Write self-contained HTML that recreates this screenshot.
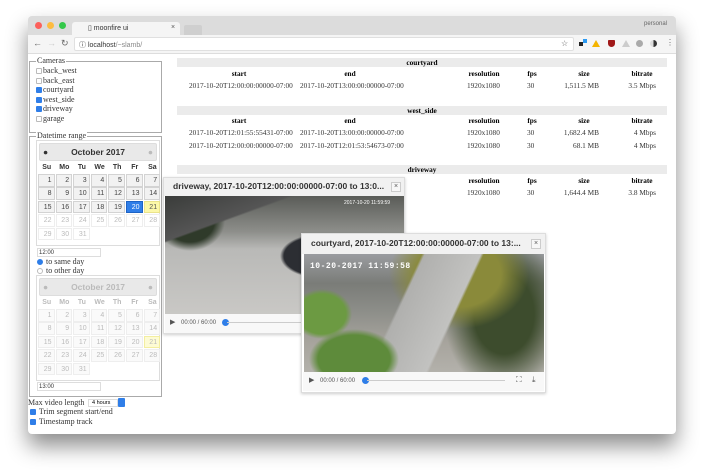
<!DOCTYPE html>
<html><head><style>
*{box-sizing:border-box;margin:0;padding:0}
body{width:704px;height:474px;background:#fff;position:relative;overflow:hidden;font-family:"Liberation Serif",serif;font-size:8px;color:#000}
.a{position:absolute}
.win{left:28px;top:16px;width:648px;height:418px;background:#fff;border-radius:4px;box-shadow:0 12px 22px rgba(0,0,0,.45);overflow:hidden}
.s{font-family:"Liberation Sans",sans-serif}
.cb{display:inline-block;width:6px;height:6px;border:1px solid #bbb;border-radius:1px;vertical-align:-1px;margin-right:1px;background:#fff}
.cb.on{background:#2f7ee8;border-color:#2f7ee8}
fieldset{position:absolute;border:1px solid #aaa}
.lg{position:absolute;background:#fff;padding:0 1px;color:#333}
.cal{position:absolute;border:1px solid #ddd;background:#fff}
.ch{position:absolute;left:2px;right:2px;top:2px;height:18px;background:#e9e9e9;border:1px solid #ddd;border-radius:2px;font:bold 8.5px "Liberation Sans",sans-serif;text-align:center;line-height:17px;color:#333}
.dn{position:absolute;font:bold 7px "Liberation Sans",sans-serif;color:#333;width:17.5px;text-align:center}
.c{position:absolute;width:16.5px;height:12.5px;border:1px solid #d3d3d3;background:#f2f2f2;font:7px "Liberation Sans",sans-serif;color:#444;text-align:right;padding-right:2px;line-height:11px}
.c.x{background:#fff;border-color:#eee;color:#bbb}
.dis .ch,.dis .dn{color:#bbb}
.inp{position:absolute;height:9px;border:1px solid #ddd;font:6px "Liberation Sans",sans-serif;line-height:8px;padding-left:1px;color:#333}
.th{position:absolute;font-weight:bold;font-size:7.3px;text-align:center}
.td{position:absolute;font-size:7.3px;color:#333}
.bar{position:absolute;left:149px;width:490px;height:9px;background:#ebebeb;text-align:center;font-weight:bold;font-size:7.3px;line-height:9px}
.dlg{position:absolute;background:#fff;border:1px solid #ddd;box-shadow:0 1px 3px rgba(0,0,0,.2)}
.dt{position:absolute;left:0;right:0;top:0;background:#f1f1f1;font:bold 8.5px "Liberation Sans",sans-serif;color:#333;padding-left:9px}
.xb{position:absolute;width:10px;height:10px;border:1px solid #ccc;background:#f7f7f7;font:7px "Liberation Sans",sans-serif;text-align:center;line-height:8px;color:#555}
.ctl{position:absolute;left:1px;right:1px;height:19px;background:#f8f8f8;font:6px "Liberation Sans",sans-serif;color:#555}
</style></head><body>
<div class="a win">
 <div class="a" style="left:0;top:0;width:648px;height:19px;background:#dcdcdc"></div>
 <div class="a" style="left:7px;top:6px;width:7px;height:7px;border-radius:50%;background:#fc605b"></div>
 <div class="a" style="left:19px;top:6px;width:7px;height:7px;border-radius:50%;background:#fdbc40"></div>
 <div class="a" style="left:31px;top:6px;width:7px;height:7px;border-radius:50%;background:#34c84a"></div>
 <div class="a" style="left:44px;top:6px;width:108px;height:14px;background:#f5f5f5;border-radius:3px 3px 0 0"></div>
 <div class="a s" style="left:60px;top:8px;font-size:7px;color:#333">▯ moonfire ui</div>
 <div class="a s" style="left:143px;top:8px;font-size:7px;color:#555">×</div>
 <div class="a" style="left:156px;top:9px;width:18px;height:10px;background:#cfcfcf;border-radius:2px 2px 0 0"></div>
 <div class="a s" style="left:616px;top:5px;font-size:6px;color:#666">personal</div>
 <div class="a" style="left:0;top:19px;width:648px;height:19px;background:#f5f5f5;border-bottom:1px solid #ddd"></div>
 <div class="a s" style="left:5px;top:22px;font-size:9px;color:#666">←&nbsp; <span style="color:#ccc">→</span>&nbsp; ↻</div>
 <div class="a" style="left:46px;top:21px;width:500px;height:14px;background:#fff;border:1px solid #e0e0e0;border-radius:2px"></div>
 <div class="a s" style="left:51px;top:24px;font-size:7px;color:#333">ⓘ localhost<span style="color:#888">/~slamb/</span></div>
 <div class="a s" style="left:533px;top:23px;font-size:8px;color:#555">☆</div>
 <div class="a" style="left:551px;top:26px;width:4px;height:4px;background:#222"></div><div class="a" style="left:555px;top:23px;width:4px;height:4px;background:#2b9af3"></div>
 <div class="a" style="left:564px;top:24px;width:0;height:0;border-left:4px solid transparent;border-right:4px solid transparent;border-bottom:7px solid #f4b400"></div>
 <div class="a" style="left:580px;top:24px;width:7px;height:7px;background:#a01818;border-radius:1px 1px 4px 4px"></div>
 <div class="a" style="left:594px;top:24px;width:0;height:0;border-left:4px solid transparent;border-right:4px solid transparent;border-bottom:7px solid #ccc"></div>
 <div class="a" style="left:608px;top:24px;width:7px;height:7px;border-radius:50%;background:#aaa"></div>
 <div class="a" style="left:622px;top:24px;width:7px;height:7px;border-radius:50%;background:linear-gradient(90deg,#ddd 50%,#333 50%)"></div>
 <div class="a s" style="left:638px;top:22px;font-size:8px;color:#666">⋮</div>

 <fieldset style="left:1px;top:45px;width:133px;height:72px"></fieldset>
 <div class="lg" style="left:8px;top:40px">Cameras</div>
 <div class="a" style="left:8px;top:50px;line-height:9.6px;color:#333">
  <div><span class="cb"></span>back_west</div>
  <div><span class="cb"></span>back_east</div>
  <div><span class="cb on"></span>courtyard</div>
  <div><span class="cb on"></span>west_side</div>
  <div><span class="cb on"></span>driveway</div>
  <div><span class="cb"></span>garage</div>
 </div>

 <fieldset style="left:1px;top:120px;width:133px;height:261px"></fieldset>
 <div class="lg" style="left:8px;top:115px">Datetime range</div>

 <div class="cal" style="left:8px;top:124px;width:124px;height:106px">
  <div class="ch">October 2017<span class="a" style="left:3px;top:0;color:#333">●</span><span class="a" style="right:3px;top:0;color:#bbb">●</span></div>
 </div>
 <div class="cal dis" style="left:8px;top:259px;width:124px;height:106px">
  <div class="ch">October 2017<span class="a" style="left:3px;top:0">●</span><span class="a" style="right:3px;top:0">●</span></div>
 </div>
 <div id="cals"></div>

 <div class="inp" style="left:9px;top:232px;width:64px">12:00</div>
 <div class="a" style="left:9px;top:241px;color:#333"><span class="cb" style="border-radius:50%;background:#2f7ee8;border-color:#2f7ee8"></span> to same day</div>
 <div class="a" style="left:9px;top:250px;color:#333"><span class="cb" style="border-radius:50%"></span> to other day</div>
 <div class="inp" style="left:9px;top:366px;width:64px">13:00</div>

 <div class="a" style="left:0;top:382px;color:#333;white-space:nowrap">Max video length</div>
 <div class="a s" style="left:60px;top:383px;width:30px;height:8px;border:1px solid #ddd;font-size:5.5px;line-height:7px;padding-left:3px">4 hours</div>
 <div class="a" style="left:90px;top:382px;width:7px;height:9px;background:#2f7ee8;border-radius:1px"></div>
 <div class="a" style="left:2px;top:391px;color:#333"><span class="cb on"></span> Trim segment start/end</div>
 <div class="a" style="left:2px;top:401px;color:#333"><span class="cb on"></span> Timestamp track</div>

 <div class="bar" style="top:42px">courtyard</div>
 <div class="bar" style="top:90px">west_side</div>
 <div class="bar" style="top:149px">driveway</div>
 <div id="tbl"></div>

 <div class="dlg" style="left:135px;top:161px;width:242px;height:157px">
  <div class="dt" style="height:18px;line-height:17px">driveway, 2017-10-20T12:00:00:00000-07:00 to 13:0...</div>
  <div class="xb" style="right:3px;top:4px">×</div>
  <div class="a" style="left:1px;top:18px;width:239px;height:118px;background:
   linear-gradient(160deg,#3a3c3a 0%,#555 22%,transparent 23%),
   radial-gradient(ellipse 40px 22px at 155px 60px,#2c2e33 90%,transparent 100%),
   radial-gradient(ellipse 35px 30px at 25px 25px,#2f3a2a 70%,transparent 100%),
   linear-gradient(180deg,#5a5c58 0%,#8d8e8a 30%,#b9b9b7 45%,#c9c8c5 100%)"></div>
  <div class="a s" style="left:180px;top:22px;font-size:5px;color:#fff">2017-10-20 11:59:59</div>
  <div class="ctl" style="top:136px"><span class="a" style="left:5px;top:4px;font-size:7px">▶</span><span class="a" style="left:16px;top:6px">00:00 / 60:00</span><span class="a" style="left:57px;top:5px;width:7px;height:7px;border-radius:50%;background:#2f7ee8"></span><span class="a" style="left:62px;top:8px;width:170px;height:1px;background:#ccc"></span></div>
 </div>

 <div class="dlg" style="left:273px;top:217px;width:245px;height:160px">
  <div class="dt" style="height:20px;line-height:19px">courtyard, 2017-10-20T12:00:00:00000-07:00 to 13:...</div>
  <div class="xb" style="right:4px;top:5px">×</div>
  <div class="a" style="left:2px;top:20px;width:240px;height:118px;background:
   radial-gradient(ellipse 45px 30px at 50px 105px,#5e8b3b 80%,transparent 100%),
   radial-gradient(ellipse 30px 25px at 18px 60px,#6c9a42 80%,transparent 100%),
   linear-gradient(115deg,transparent 0%,transparent 40%,#b0b0ae 41%,#c2c2c0 60%,transparent 61%),
   radial-gradient(ellipse 70px 55px at 155px 20px,#8a8a3a 60%,transparent 100%),
   radial-gradient(ellipse 60px 80px at 200px 60px,#3d4c2d 50%,transparent 100%),
   linear-gradient(180deg,#9a9ca0 0%,#7a7c78 25%,#8e8f8a 50%,#a7a49d 75%,#b3b1ab 100%)"></div>
  <div class="a" style="left:8px;top:28px;font:bold 8px 'Liberation Mono',monospace;color:#fff;letter-spacing:.5px">10-20-2017 11:59:58</div>
  <div class="ctl" style="top:138px"><span class="a" style="left:6px;top:4px;font-size:7px">▶</span><span class="a" style="left:17px;top:6px">00:00 / 60:00</span><span class="a" style="left:59px;top:5px;width:7px;height:7px;border-radius:50%;background:#2f7ee8"></span><span class="a" style="left:64px;top:8px;width:138px;height:1px;background:#ccc"></span><span class="a" style="left:213px;top:3px;font-size:8px">⛶</span><span class="a" style="left:229px;top:3px;font-size:8px">⤓</span></div>
 </div>
</div>
<script>
(function(){
var h='';
function cal(top,dis){
 var L=10,names=['Su','Mo','Tu','We','Th','Fr','Sa'];
 for(var i=0;i<7;i++)h+='<div class="dn" style="left:'+(L+i*17.6)+'px;top:'+(top+24)+'px'+(dis?';color:#bbb':'')+'">'+names[i]+'</div>';
 for(var d=1;d<=31;d++){var r=Math.floor((d-1)/7),c=(d-1)%7;
  var st='left:'+(L+c*17.6)+'px;top:'+(top+34+r*13.4)+'px;';var cls='c';
  if(dis){st+='color:#bbb;background:#fafafa;border-color:#eee;';if(d==21)st+='background:#fdfbd4;border-color:#f3eea0;';}
  else if(d==20)st+='background:#2f7ee8;border-color:#1d63c5;color:#fff;';
  else if(d==21)st+='background:#fcf8a9;border-color:#eae38a;color:#555;';
  else if(d>21)cls+=' x';
  h+='<div class="'+cls+'" style="'+st+'">'+d+'</div>';}
}
cal(124,false);cal(259,true);
document.getElementById('cals').innerHTML=h;
var t='',cols=[[211,'start'],[322,'end'],[456,'resolution'],[504,'fps'],[556,'size'],[614,'bitrate']];
function hdr(y){cols.forEach(function(c){t+='<div class="th" style="left:'+(c[0]-30)+'px;width:60px;top:'+y+'px">'+c[1]+'</div>';});}
function row(y,a,b,s,br){
 t+='<div class="td" style="left:161px;top:'+y+'px">'+a+'</div>';
 t+='<div class="td" style="left:272px;top:'+y+'px">'+b+'</div>';
 t+='<div class="td" style="left:439px;top:'+y+'px">1920x1080</div>';
 t+='<div class="td" style="left:499px;top:'+y+'px">30</div>';
 t+='<div class="td" style="right:77px;top:'+y+'px">'+s+'</div>';
 t+='<div class="td" style="right:20px;top:'+y+'px">'+br+'</div>';}
hdr(53);row(65,'2017-10-20T12:00:00:00000-07:00','2017-10-20T13:00:00:00000-07:00','1,511.5 MB','3.5 Mbps');
hdr(100);row(112,'2017-10-20T12:01:55:55431-07:00','2017-10-20T13:00:00:00000-07:00','1,682.4 MB','4 Mbps');
row(125,'2017-10-20T12:00:00:00000-07:00','2017-10-20T12:01:53:54673-07:00','68.1 MB','4 Mbps');
hdr(160);row(172,'2017-10-20T12:00:00:00000-07:00','2017-10-20T13:00:00:00000-07:00','1,644.4 MB','3.8 Mbps');
document.getElementById('tbl').innerHTML=t;
})();
</script>
</body></html>
